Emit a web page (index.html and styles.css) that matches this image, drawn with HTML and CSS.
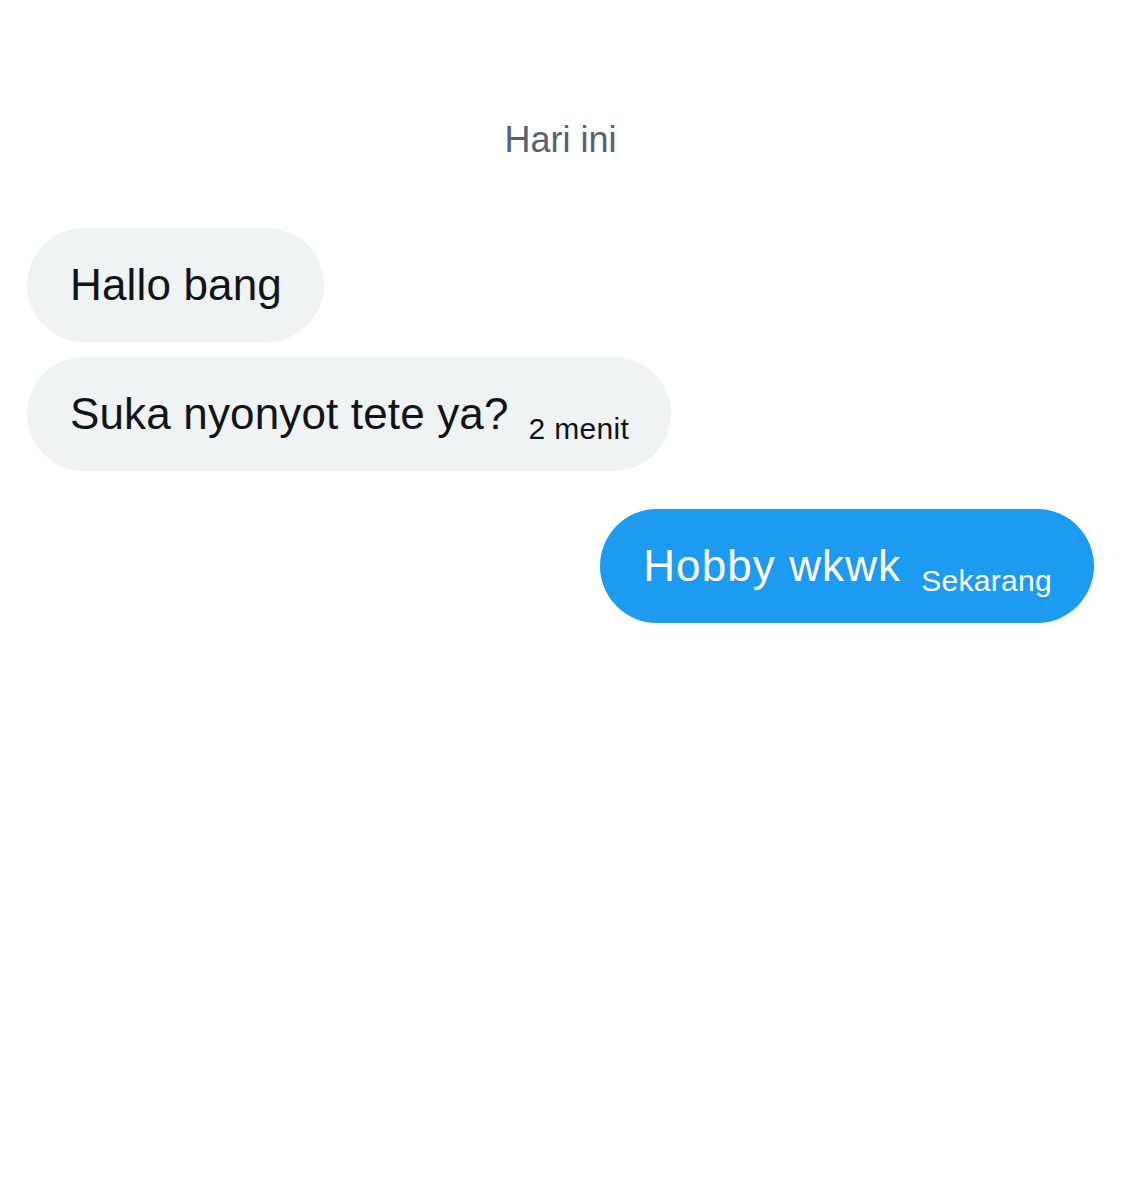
FILE: index.html
```html
<!DOCTYPE html>
<html lang="id">
<head>
<meta charset="utf-8">
<title>Pesan</title>
<link rel="stylesheet" href="styles.css">
</head>
<body>
<main class="chat">
  <div class="day">Hari ini</div>
  <div class="thread">
    <div class="row row-in"><div class="bubble in">Hallo bang</div></div>
    <div class="row row-in"><div class="bubble in">Suka nyonyot tete ya?<span class="time">2 menit</span></div></div>
    <div class="row row-out"><div class="bubble out">Hobby wkwk<span class="time">Sekarang</span></div></div>
  </div>
</main>
</body>
</html>
```

FILE: styles.css
```css
html, body {
  margin: 0;
  padding: 0;
  background: #ffffff;
}

body {
  font-family: "Liberation Sans", Arial, sans-serif;
  color: #0f1419;
}

.chat {
  padding: 120px 28px 0 27px;
}

.day {
  text-align: center;
  font-size: 36px;
  line-height: 40px;
  color: #536471;
}

.thread {
  margin-top: 68px;
  display: flex;
  flex-direction: column;
}

.row {
  display: flex;
}

.row + .row {
  margin-top: 15px;
}

.row-out {
  justify-content: flex-end;
  margin-top: 38px !important;
}

.bubble {
  height: 114px;
  line-height: 114px;
  font-size: 44px;
  padding: 0 42px 0 43px;
  border-radius: 57px;
  white-space: nowrap;
  letter-spacing: 0.15px;
}

.bubble.in {
  background: #eff3f4;
  color: #0f1419;
}

.bubble.out {
  background: #1d9bf0;
  color: #ffffff;
  letter-spacing: 1.1px;
}

.time {
  font-size: 30px;
  line-height: 1;
  letter-spacing: 0.3px;
  vertical-align: -10px;
  margin-left: 20px;
}
```
